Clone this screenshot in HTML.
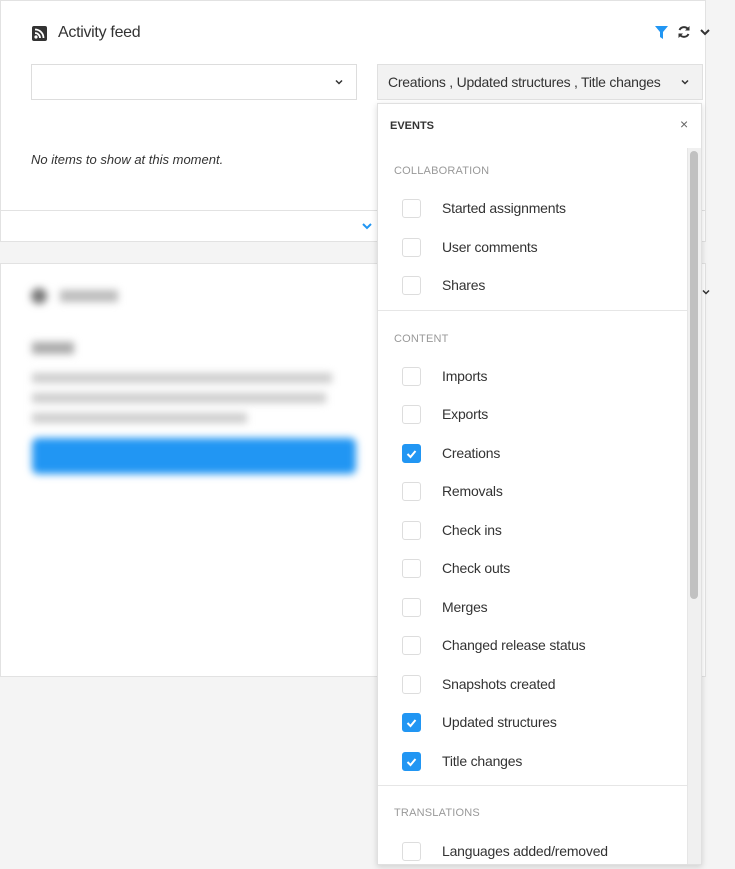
<!DOCTYPE html><html><head><style>
body{margin:0;width:735px;height:869px;background:#f4f4f4;font-family:"Liberation Sans",sans-serif;position:relative;overflow:hidden;color:#333}
.a{position:absolute}
.p{background:#fff;border:1px solid #e2e2e2;box-sizing:border-box}
.cb{position:absolute;left:24px;width:19px;height:19px;border:1px solid #ddd;border-radius:3px;box-sizing:border-box;background:#fff}
.cb.on{background:#2196f3;border-color:#2196f3}
.lb{position:absolute;left:64px;font-size:14px;color:#333;letter-spacing:-.2px}
.sec{position:absolute;left:16px;font-size:11px;color:#999;letter-spacing:.2px}
.hr{position:absolute;left:0;width:309px;height:1px;background:#e6e6e6}
</style></head><body>
<div class="a p" style="left:0;top:0;width:706px;height:242px"></div>
<div class="a" style="left:1px;top:210px;width:704px;height:1px;background:#e2e2e2"></div>
<svg class="a" style="left:361px;top:222px" width="12" height="8"><path d="M2 2l4 4 4-4" stroke="#2196f3" stroke-width="2" fill="none"/></svg>
<svg class="a" style="left:32px;top:26px" width="15" height="15"><rect width="15" height="15" rx="2" fill="#333"/><circle cx="4" cy="11" r="1.6" fill="#fff"/><path d="M3 7a5 5 0 0 1 5 5M3 3.5a8.5 8.5 0 0 1 8.5 8.5" stroke="#fff" stroke-width="1.8" fill="none"/></svg>
<div class="a" style="left:58px;top:24px;font-size:16px;color:#333;letter-spacing:-.3px">Activity feed</div>
<svg class="a" style="left:655px;top:26px" width="13" height="13"><path d="M0 0h13l-5 6v7l-3-2V6z" fill="#2196f3"/></svg>
<svg class="a" style="left:677px;top:25px" width="14" height="14"><path d="M11.5 5A5 5 0 0 0 2.5 5M2.5 9a5 5 0 0 0 9 0" stroke="#333" stroke-width="2" fill="none"/><path d="M12.5 1v4.5H8zM1.5 13V8.5H6z" fill="#333"/></svg>
<svg class="a" style="left:699px;top:28px" width="12" height="8"><path d="M2 2l4 4 4-4" stroke="#333" stroke-width="2" fill="none"/></svg>
<div class="a" style="left:31px;top:64px;width:326px;height:36px;border:1px solid #ddd;box-sizing:border-box;background:#fff"></div>
<svg class="a" style="left:334px;top:79px" width="10" height="7"><path d="M2 1.5l3 3 3-3" stroke="#333" stroke-width="1.5" fill="none"/></svg>
<div class="a" style="left:377px;top:64px;width:326px;height:36px;background:#f2f2f2;border:1px solid #e0e0e0;box-sizing:border-box"></div>
<div class="a" style="left:388px;top:74px;font-size:14px;color:#333;letter-spacing:-.25px">Creations , Updated structures , Title changes</div>
<svg class="a" style="left:680px;top:79px" width="10" height="7"><path d="M2 1.5l3 3 3-3" stroke="#333" stroke-width="1.5" fill="none"/></svg>
<div class="a" style="left:31px;top:152px;font-size:13px;font-style:italic;color:#333">No items to show at this moment.</div>

<div class="a p" style="left:0;top:263px;width:706px;height:414px"></div>
<div class="a" style="left:0;top:263px;width:370px;height:250px;filter:blur(4px)">
<div class="a" style="left:31px;top:25px;width:16px;height:16px;border-radius:50%;background:#777"></div>
<div class="a" style="left:60px;top:27px;width:58px;height:12px;background:#bbb"></div>
<div class="a" style="left:32px;top:79px;width:42px;height:12px;background:#aaa"></div>
<div class="a" style="left:32px;top:110px;width:300px;height:10px;background:#ccc"></div>
<div class="a" style="left:32px;top:130px;width:294px;height:10px;background:#ccc"></div>
<div class="a" style="left:32px;top:150px;width:215px;height:10px;background:#ccc"></div>
<div class="a" style="left:32px;top:175px;width:324px;height:36px;border-radius:6px;background:#2196f3"></div>
</div>
<svg class="a" style="left:701px;top:289px" width="10" height="7"><path d="M2 1.5l3 3 3-3" stroke="#333" stroke-width="1.5" fill="none"/></svg>

<div class="a" style="left:377px;top:103px;width:325px;height:762px;background:#fff;border:1px solid #e0e0e0;box-sizing:border-box;box-shadow:0 2px 6px rgba(0,0,0,.15);overflow:hidden">
<div class="a" style="left:12px;top:16px;font-size:11px;font-weight:bold;color:#333">EVENTS</div>
<div class="a" style="left:302px;top:12px;font-size:14px;color:#666">×</div>
<div class="a" style="left:309px;top:44px;width:15px;height:720px;background:#f0f0f0;border-left:1px solid #e6e6e6"></div>
<div class="a" style="left:312px;top:47px;width:8px;height:448px;background:#c1c1c1;border-radius:4px"></div>
<div class="sec" style="top:61px">COLLABORATION</div>
<div class="cb" style="top:95px"></div><div class="lb" style="top:96px">Started assignments</div>
<div class="cb" style="top:134px"></div><div class="lb" style="top:135px">User comments</div>
<div class="cb" style="top:172px"></div><div class="lb" style="top:173px">Shares</div>
<div class="hr" style="top:206px"></div>
<div class="sec" style="top:229px">CONTENT</div>
<div class="cb" style="top:263px"></div><div class="lb" style="top:264px">Imports</div>
<div class="cb" style="top:301px"></div><div class="lb" style="top:302px">Exports</div>
<div class="cb on" style="top:340px"><svg width="17" height="17"><path d="M4.5 9l3 3 5-6" stroke="#fff" stroke-width="2" fill="none"/></svg></div><div class="lb" style="top:341px">Creations</div>
<div class="cb" style="top:378px"></div><div class="lb" style="top:379px">Removals</div>
<div class="cb" style="top:417px"></div><div class="lb" style="top:418px">Check ins</div>
<div class="cb" style="top:455px"></div><div class="lb" style="top:456px">Check outs</div>
<div class="cb" style="top:494px"></div><div class="lb" style="top:495px">Merges</div>
<div class="cb" style="top:532px"></div><div class="lb" style="top:533px">Changed release status</div>
<div class="cb" style="top:571px"></div><div class="lb" style="top:572px">Snapshots created</div>
<div class="cb on" style="top:609px"><svg width="17" height="17"><path d="M4.5 9l3 3 5-6" stroke="#fff" stroke-width="2" fill="none"/></svg></div><div class="lb" style="top:610px">Updated structures</div>
<div class="cb on" style="top:648px"><svg width="17" height="17"><path d="M4.5 9l3 3 5-6" stroke="#fff" stroke-width="2" fill="none"/></svg></div><div class="lb" style="top:649px">Title changes</div>
<div class="hr" style="top:681px"></div>
<div class="sec" style="top:703px">TRANSLATIONS</div>
<div class="cb" style="top:738px"></div><div class="lb" style="top:739px">Languages added/removed</div>
</div>
</body></html>
